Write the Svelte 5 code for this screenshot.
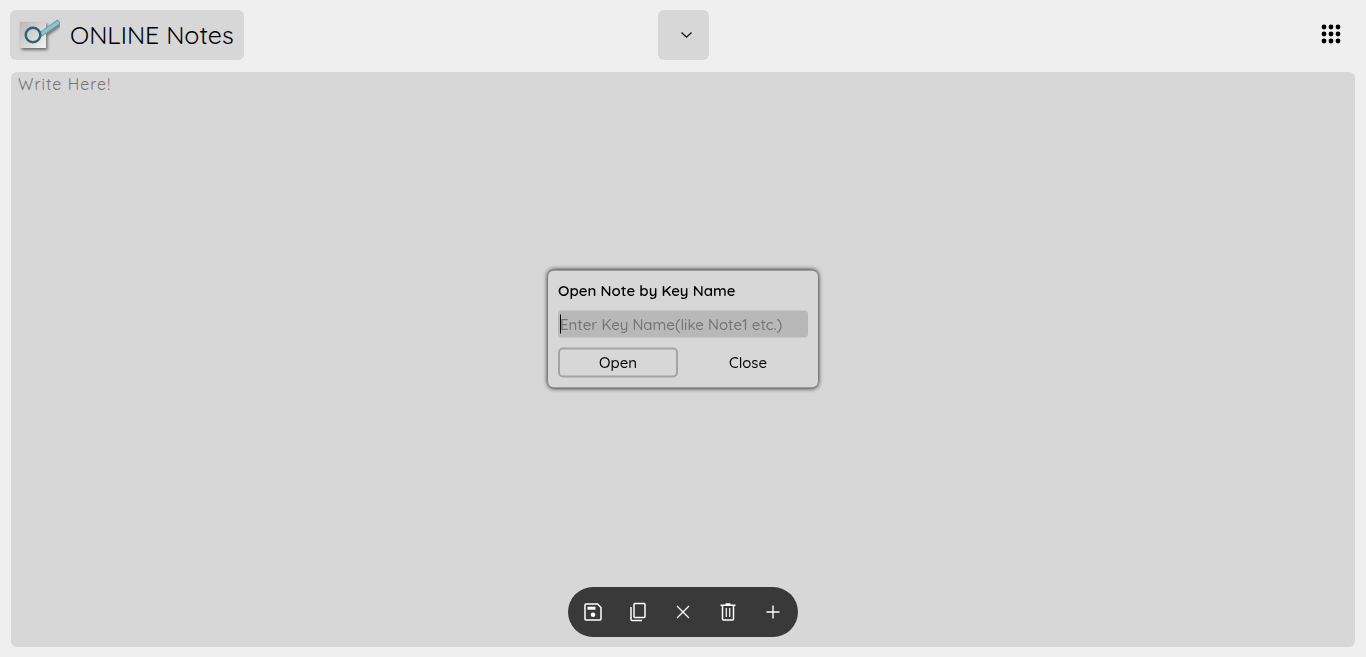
<script>
  let note = $state('');
  let key = $state('');
  let dialogOpen = $state(true);
</script>

<div class="app">
  <header>
    <a class="brand" href="#home">
      <svg class="logo" width="50" height="40" viewBox="0 0 50 40" aria-hidden="true">
        <defs>
          <linearGradient id="paper" x1="0" y1="0" x2="1" y2="1">
            <stop offset="0" stop-color="#b9b6b5" />
            <stop offset="1" stop-color="#f3f3f3" />
          </linearGradient>
          <filter id="shade" x="-30%" y="-30%" width="170%" height="170%">
            <feDropShadow dx="1.5" dy="2" stdDeviation="1.8" flood-color="#000" flood-opacity="0.5" />
          </filter>
        </defs>
        <g filter="url(#shade)">
          <rect x="10" y="7" width="26" height="26" fill="url(#paper)" />
          <path d="M32 18.5 47 8" stroke="#5a9aab" stroke-width="5" stroke-linecap="square" />
          <path d="M32 18.5 47 8" stroke="#8fc3d1" stroke-width="3.4" stroke-linecap="square" />
        </g>
        <circle cx="23" cy="20" r="7.3" fill="none" stroke="#2f6373" stroke-width="2.4" />
      </svg>
      <span>ONLINE Notes</span>
    </a>
    <button class="picker" aria-label="Choose note">
      <svg width="13" height="8" viewBox="0 0 13 8" fill="none" stroke="#111" stroke-width="1.3"><path d="m1.5 1.5 5 4.7 5-4.7" /></svg>
    </button>
    <button class="menu" aria-label="Menu">
      <svg width="20" height="20" viewBox="0 0 20 20">
        {#each [3, 10, 17] as y}
          {#each [3, 10, 17] as x}
            <circle cx={x} cy={y} r="2.4" />
          {/each}
        {/each}
      </svg>
    </button>
  </header>

  <textarea aria-label="Note" placeholder="Write Here!" bind:value={note}></textarea>

  <div class="tools">
    <button aria-label="Save">
      <svg width="18" height="18" viewBox="0 0 18 18" fill="none" stroke="#fff" stroke-width="1.5"><path d="M2 1h11.5L17 4.5V16q0 1-1 1H2q-1 0-1-1V2q0-1 1-1Z" /><path d="M3.5 5.2h8" stroke-width="3" /><circle cx="9" cy="11.8" r="2.3" fill="#fff" stroke="none" /></svg>
    </button>
    <button aria-label="Copy">
      <svg width="18" height="20" viewBox="0 0 18 20" fill="none" stroke="#fff" stroke-width="1.5"><rect x="5" y="1.5" width="11" height="14" rx="1" /><path d="M2 5v12.5q0 1 1 1h10" /></svg>
    </button>
    <button aria-label="Clear">
      <svg width="14" height="14" viewBox="0 0 14 14" stroke="#fff" stroke-width="1.3"><path d="m1 1 12 12M13 1 1 13" /></svg>
    </button>
    <button aria-label="Delete">
      <svg width="16" height="18" viewBox="0 0 16 18" fill="none" stroke="#fff" stroke-width="1.5"><path d="M.5 2.3h15M5.5 1h5M2.5 2.5V16q0 1 1 1h9q1 0 1-1V2.5" /><path d="M6.3 5v9M9.7 5v9" stroke-width="1.2" /></svg>
    </button>
    <button aria-label="Add">
      <svg width="14" height="14" viewBox="0 0 14 14" stroke="#fff" stroke-width="1.4"><path d="M7 .5v13M.5 7h13" /></svg>
    </button>
  </div>

  {#if dialogOpen}
    <form class="dialog" onsubmit={(e) => e.preventDefault()}>
      <label for="key">Open Note by Key Name</label>
      <div class="field">
        <input id="key" placeholder="Enter Key Name(like Note1 etc.)" bind:value={key} />
        {#if !key}<span class="caret"></span>{/if}
      </div>
      <div class="actions">
        <button class="open">Open</button>
        <button type="button" onclick={() => (dialogOpen = false)}>Close</button>
      </div>
    </form>
  {/if}
</div>

<style>
  :global(body) {
    background: #efefef;
  }
  .app,
  button,
  input,
  textarea {
    box-sizing: border-box;
    font-family: Quicksand, Lato, sans-serif;
    color: #000;
  }
  .app {
    display: flex;
    flex-direction: column;
    gap: 12px;
    min-height: 100vh;
    padding: 10px 11px;
  }
  header {
    display: grid;
    grid-template-columns: 1fr auto 1fr;
    align-items: start;
    margin: 0 -1px;
  }
  button {
    display: flex;
    align-items: center;
    justify-content: center;
    padding: 0;
    border: 0;
    background: none;
    cursor: pointer;
  }
  .brand {
    box-sizing: border-box;
    display: flex;
    align-items: center;
    justify-self: start;
    gap: 10px;
    height: 50px;
    padding: 0 10px 0 0;
    border-radius: 6px;
    background: #d7d7d7;
    color: #000;
    font-size: 25px;
    line-height: 32px;
    text-decoration: none;
  }
  .picker {
    width: 51px;
    height: 50px;
    padding-left: 6px;
    border-radius: 6px;
    background: #d7d7d7;
  }
  .menu {
    justify-self: end;
    width: 50px;
    height: 48px;
    border-radius: 6px;
  }
  textarea {
    flex: 1;
    width: 100%;
    padding: 2px 7px;
    border: 0;
    border-radius: 6px;
    outline: 0;
    resize: none;
    background: #d7d7d7;
    font-size: 16px;
    line-height: 20px;
    letter-spacing: 1px;
  }
  ::placeholder {
    color: #757575;
    opacity: 1;
  }
  .tools {
    position: fixed;
    bottom: 20px;
    left: 50%;
    display: flex;
    box-sizing: border-box;
    width: 230px;
    padding: 0 2px;
    border-radius: 25px;
    background: #393939;
    transform: translateX(-50%);
  }
  .tools button {
    width: 45px;
    height: 50px;
  }
  .dialog {
    position: fixed;
    top: 50%;
    left: 50%;
    box-sizing: border-box;
    display: flex;
    flex-direction: column;
    gap: 10px;
    width: 270px;
    padding: 10px;
    border-radius: 6px;
    background: #d7d7d7;
    box-shadow: 0 0 5px #000;
    font-size: 15px;
    line-height: 20px;
    transform: translate(-50%, -50%);
  }
  label {
    font-weight: 600;
  }
  .field {
    position: relative;
    display: flex;
  }
  input {
    width: 100%;
    height: 27px;
    padding: 0 2px;
    border: 0;
    border-radius: 4px;
    outline: 0;
    background: #b8b8b8;
    font-size: 15px;
    font-weight: 500;
  }
  .caret {
    position: absolute;
    top: 4px;
    left: 2px;
    width: 1px;
    height: 19px;
    background: #000;
  }
  .actions {
    display: grid;
    grid-template-columns: 1fr 1fr;
    gap: 10px;
  }
  .actions button {
    height: 30px;
    border-radius: 5px;
    font-size: 15px;
    font-weight: 500;
  }
  .actions .open {
    border: 2px solid #a4a4a4;
  }
</style>
